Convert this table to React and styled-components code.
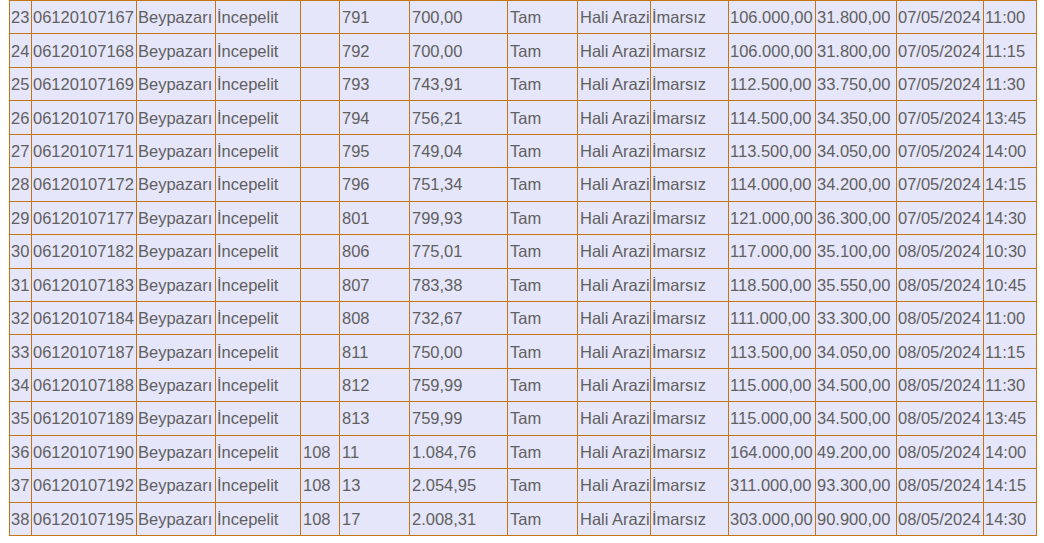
import React from "react";
import styled, { createGlobalStyle } from "styled-components";

const GlobalStyle = createGlobalStyle`
  body {
    margin: 0;
    background: #ffffff;
    font-family: "Liberation Sans", Arial, sans-serif;
  }
`;

const widths = [22, 105, 79, 85, 39, 70, 98, 70, 73, 78, 87, 81, 87, 53];

const rows = [
  ["23", "06120107167", "", "791", "700,00", "106.000,00", "31.800,00", "07/05/2024", "11:00"],
  ["24", "06120107168", "", "792", "700,00", "106.000,00", "31.800,00", "07/05/2024", "11:15"],
  ["25", "06120107169", "", "793", "743,91", "112.500,00", "33.750,00", "07/05/2024", "11:30"],
  ["26", "06120107170", "", "794", "756,21", "114.500,00", "34.350,00", "07/05/2024", "13:45"],
  ["27", "06120107171", "", "795", "749,04", "113.500,00", "34.050,00", "07/05/2024", "14:00"],
  ["28", "06120107172", "", "796", "751,34", "114.000,00", "34.200,00", "07/05/2024", "14:15"],
  ["29", "06120107177", "", "801", "799,93", "121.000,00", "36.300,00", "07/05/2024", "14:30"],
  ["30", "06120107182", "", "806", "775,01", "117.000,00", "35.100,00", "08/05/2024", "10:30"],
  ["31", "06120107183", "", "807", "783,38", "118.500,00", "35.550,00", "08/05/2024", "10:45"],
  ["32", "06120107184", "", "808", "732,67", "111.000,00", "33.300,00", "08/05/2024", "11:00"],
  ["33", "06120107187", "", "811", "750,00", "113.500,00", "34.050,00", "08/05/2024", "11:15"],
  ["34", "06120107188", "", "812", "759,99", "115.000,00", "34.500,00", "08/05/2024", "11:30"],
  ["35", "06120107189", "", "813", "759,99", "115.000,00", "34.500,00", "08/05/2024", "13:45"],
  ["36", "06120107190", "108", "11", "1.084,76", "164.000,00", "49.200,00", "08/05/2024", "14:00"],
  ["37", "06120107192", "108", "13", "2.054,95", "311.000,00", "93.300,00", "08/05/2024", "14:15"],
  ["38", "06120107195", "108", "17", "2.008,31", "303.000,00", "90.900,00", "08/05/2024", "14:30"],
];

const Table = styled.table`
  margin-left: 9px;
  width: 1027px;
  border-collapse: collapse;
  table-layout: fixed;
  background: #e6e6fa;
`;

const Row = styled.tr`
  height: 33.44px;
`;

const Cell = styled.td`
  border: 1px solid #c27512;
  padding: 1px 0 0 ${(p) => (p.$pad ? 2 : 1)}px;
  font-size: 16.5px;
  color: #606060;
  white-space: nowrap;
  overflow: hidden;
  vertical-align: middle;
`;

export default function App() {
  return (
    <>
      <GlobalStyle />
      <Table>
        <colgroup>
          {widths.map((w, i) => (
            <col key={i} style={{ width: w }} />
          ))}
        </colgroup>
        <tbody>
          {rows.map((r) => (
            <Row key={r[0]}>
              <Cell>{r[0]}</Cell>
              <Cell>{r[1]}</Cell>
              <Cell>Beypazarı</Cell>
              <Cell>İncepelit</Cell>
              <Cell $pad>{r[2]}</Cell>
              <Cell $pad>{r[3]}</Cell>
              <Cell $pad>{r[4]}</Cell>
              <Cell $pad>Tam</Cell>
              <Cell $pad>Hali Arazi</Cell>
              <Cell>İmarsız</Cell>
              <Cell>{r[5]}</Cell>
              <Cell>{r[6]}</Cell>
              <Cell>{r[7]}</Cell>
              <Cell>{r[8]}</Cell>
            </Row>
          ))}
        </tbody>
      </Table>
    </>
  );
}
